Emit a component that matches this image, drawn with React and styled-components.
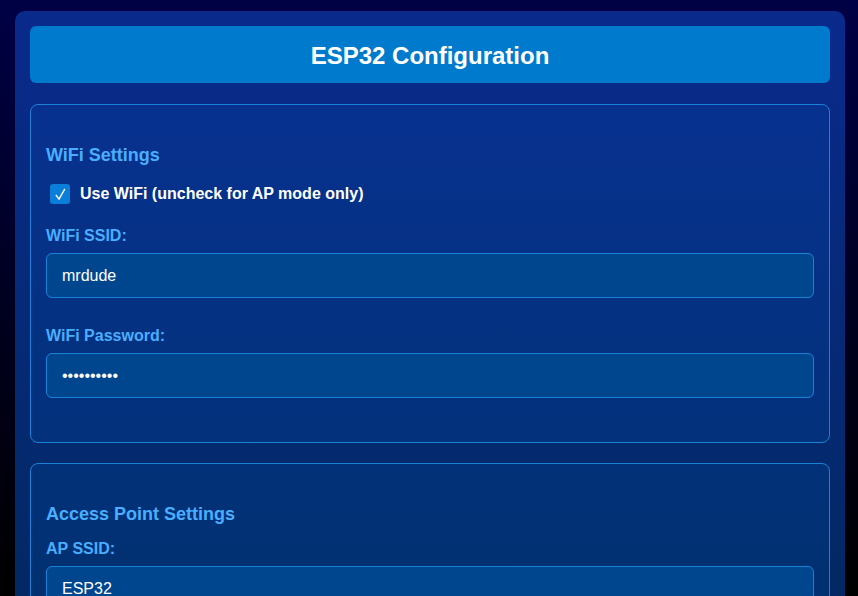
import React, { useState } from "react";
import styled, { createGlobalStyle } from "styled-components";

const GlobalStyle = createGlobalStyle`
  html, body {
    margin: 0;
    padding: 0;
  }
  body {
    min-height: 100vh;
    background: linear-gradient(to bottom, #000046 0%, #00001a 60%, #000000 100%) fixed;
    font-family: "Liberation Sans", Arial, sans-serif;
    color: #ffffff;
  }
`;

const Container = styled.div`
  width: 800px;
  margin: 11px 0 0 15px;
  padding: 15px;
  border-radius: 10px;
  background: linear-gradient(to bottom, #0a2a8c 0%, #03296a 60%, #02264e 100%);
`;

const Header = styled.h1`
  margin: 0 0 21px;
  padding: 16px 0 13px;
  border-radius: 6px;
  background: #007acc;
  font-size: 24px;
  font-weight: bold;
  text-align: center;
  color: #ffffff;
`;

const Section = styled.section`
  padding: 19px 15px 44px;
  margin-bottom: 20px;
  border: 1px solid #1a82d6;
  border-radius: 8px;
  background: rgba(0, 110, 210, 0.12);
`;

const SectionTitle = styled.h3`
  margin: 21px 0 ${(p) => p.$gap}px;
  font-size: 18px;
  font-weight: bold;
  color: #4aaeff;
`;

const CheckRow = styled.label`
  display: flex;
  align-items: center;
  gap: 10px;
  margin: 0 0 23px 4px;
  font-size: 16px;
  font-weight: bold;
  color: #ffffff;
  cursor: pointer;
`;

const Box = styled.span`
  display: flex;
  align-items: center;
  justify-content: center;
  width: 20px;
  height: 20px;
  border-radius: 3px;
  background: ${(p) => (p.$checked ? "#0a7ed8" : "transparent")};
  border: ${(p) => (p.$checked ? "none" : "1px solid #4aaeff")};
  box-sizing: border-box;
`;

const HiddenInput = styled.input`
  display: none;
`;

const Field = styled.div`
  margin-bottom: ${(p) => (p.$last ? 0 : 29)}px;
`;

const Label = styled.label`
  display: block;
  margin-bottom: 8px;
  font-size: 16px;
  font-weight: bold;
  color: #4aaeff;
`;

const TextInput = styled.input`
  display: block;
  width: 100%;
  height: 45px;
  box-sizing: border-box;
  padding: 0 15px;
  border: 1px solid #1a82d6;
  border-radius: 6px;
  background: #00468f;
  font-family: "Liberation Sans", Arial, sans-serif;
  font-size: 16px;
  color: #ffffff;
  outline: none;
`;

const SaveButton = styled.button`
  display: block;
  width: 100%;
  padding: 14px;
  border: none;
  border-radius: 6px;
  background: #007acc;
  font-family: "Liberation Sans", Arial, sans-serif;
  font-size: 18px;
  font-weight: bold;
  color: #ffffff;
  cursor: pointer;
`;

const Check = () => (
  <svg width="15" height="15" viewBox="0 0 14 14" fill="none">
    <path d="M3 7.8 L5.6 11.4 L10.8 2.2" stroke="#ffffff" strokeWidth="1.3" strokeLinecap="round" strokeLinejoin="round" />
  </svg>
);

const App = () => {
  const [useWifi, setUseWifi] = useState(true);
  const [ssid, setSsid] = useState("mrdude");
  const [pass, setPass] = useState("password12");
  const [apSsid, setApSsid] = useState("ESP32");
  const [apPass, setApPass] = useState("12345678");

  return (
    <>
      <GlobalStyle />
      <Container>
        <Header>ESP32 Configuration</Header>

        <Section>
          <SectionTitle $gap={18}>WiFi Settings</SectionTitle>
          <CheckRow>
            <HiddenInput
              type="checkbox"
              checked={useWifi}
              onChange={() => setUseWifi(!useWifi)}
            />
            <Box $checked={useWifi}>{useWifi && <Check />}</Box>
            Use WiFi (uncheck for AP mode only)
          </CheckRow>
          <Field>
            <Label htmlFor="ssid">WiFi SSID:</Label>
            <TextInput id="ssid" value={ssid} onChange={(e) => setSsid(e.target.value)} />
          </Field>
          <Field $last>
            <Label htmlFor="pass">WiFi Password:</Label>
            <TextInput
              id="pass"
              type="password"
              value={pass}
              onChange={(e) => setPass(e.target.value)}
            />
          </Field>
        </Section>

        <Section>
          <SectionTitle $gap={15}>Access Point Settings</SectionTitle>
          <Field>
            <Label htmlFor="apssid">AP SSID:</Label>
            <TextInput id="apssid" value={apSsid} onChange={(e) => setApSsid(e.target.value)} />
          </Field>
          <Field $last>
            <Label htmlFor="appass">AP Password:</Label>
            <TextInput
              id="appass"
              type="password"
              value={apPass}
              onChange={(e) => setApPass(e.target.value)}
            />
          </Field>
        </Section>

        <SaveButton>Save Configuration</SaveButton>
      </Container>
    </>
  );
};

export default App;
